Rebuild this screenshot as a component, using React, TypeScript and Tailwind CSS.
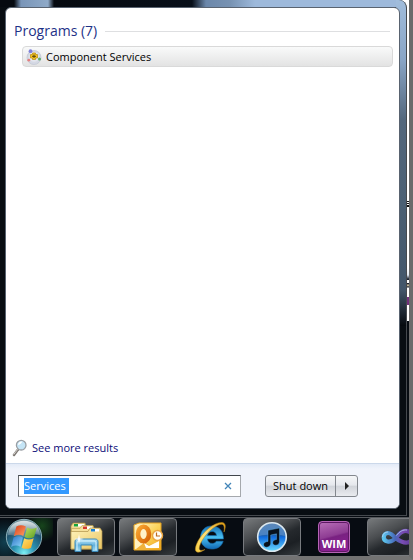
import type { ReactNode } from 'react'

interface TaskButtonProps {
  label: string
  active?: boolean
  className?: string
  children: ReactNode
}

function ComponentServicesIcon() {
  return (
    <svg viewBox="0 0 16 16" className="h-4 w-4 shrink-0" aria-hidden>
      <circle cx="8" cy="8.5" r="7" fill="#d5d9e4" stroke="#c3c8d4" strokeWidth=".8" />
      <circle cx="8" cy="8" r="4.8" fill="#e4e6ee" />
      <path d="M6.5 4h3v1.500h2v3.500h-2v1.500h-3V9h-2V5.500h2z" fill="#f4c420" stroke="#b8890c" strokeWidth=".7" />
      <path d="M8 5.500v3.500M6 7.300h4" stroke="#55430e" strokeWidth="1" />
      <circle cx="4.5" cy="2.2" r="1.900" fill="#7f81da" />
      <circle cx="2.8" cy="11.2" r="1.400" fill="#e58080" />
      <circle cx="13.5" cy="10" r="1.500" fill="#5aab68" />
    </svg>
  )
}

function MagnifierIcon() {
  return (
    <svg viewBox="0 0 16 18" className="h-[18px] w-4 shrink-0" aria-hidden>
      <path d="M6 10.5L2 16" stroke="#7d7873" strokeWidth="2.4" strokeLinecap="round" />
      <path d="M5.5 10.5L2 15.2" stroke="#d3cfcb" strokeWidth="1" strokeLinecap="round" />
      <circle cx="9.2" cy="6.2" r="4.800" fill="#c5e5f6" stroke="#9a9fa4" strokeWidth="1.3" />
      <path d="M6 6a3.4 3.4 0 0 1 4.5-3.2C9 4 8.500 6 6 6z" fill="#fff" />
    </svg>
  )
}

function WindowsOrb() {
  return (
    <svg viewBox="0 0 40 40" className="h-[38px] w-[38px]" aria-hidden>
      <defs>
        <radialGradient id="orb" cx="50%" cy="95%" r="85%">
          <stop offset="0" stopColor="#7df0f4" />
          <stop offset=".35" stopColor="#2c94b4" />
          <stop offset=".75" stopColor="#205470" />
          <stop offset="1" stopColor="#6d8c96" />
        </radialGradient>
        <linearGradient id="orbShine" x1="0" y1="0" x2="0" y2="1">
          <stop offset="0" stopColor="#fff" stopOpacity=".75" />
          <stop offset="1" stopColor="#fff" stopOpacity=".12" />
        </linearGradient>
        <linearGradient id="flagRed" x1="0" y1="0" x2="1" y2="1">
          <stop offset="0" stopColor="#d93d17" />
          <stop offset="1" stopColor="#ffa068" />
        </linearGradient>
        <linearGradient id="flagGreen" x1="0" y1="0" x2="1" y2="1">
          <stop offset="0" stopColor="#b9dd61" />
          <stop offset="1" stopColor="#5c9e22" />
        </linearGradient>
        <linearGradient id="flagBlue" x1="0" y1="0" x2="1" y2="1">
          <stop offset="0" stopColor="#2a72c4" />
          <stop offset="1" stopColor="#8fd6fb" />
        </linearGradient>
        <linearGradient id="flagYellow" x1="0" y1="0" x2="1" y2="1">
          <stop offset="0" stopColor="#ffe473" />
          <stop offset="1" stopColor="#f5a51b" />
        </linearGradient>
      </defs>
      <circle cx="20" cy="20" r="18.600" fill="url(#orb)" stroke="#8eb3bd" strokeWidth="1" />
      <path d="M3 18C4 8 11 3 20 3s16 5 17 15c-9-3-14 3-20 2-6 0-9-3-14-2z" fill="url(#orbShine)" />
      <path d="M12 9c3.500-2 6.500-1.800 10 0l-2.700 10c-3.300-1.800-6.500-1.700-10 .2z" fill="url(#flagRed)" />
      <path d="M23.300 10c3.300 1.800 6.500 1.700 10.200 0l-2.900 10c-3.300 1.700-6.700 1.800-10 0z" fill="url(#flagGreen)" />
      <path d="M9 20.600c3.300-1.900 6.500-2 9.900-.2l-2.600 9.900c-3.300-1.800-6.500-1.700-9.900.1z" fill="url(#flagBlue)" />
      <path d="M20.200 21.300c3.300 1.800 6.600 1.700 10 0l-2.800 9.900c-3.300 1.700-6.600 1.700-9.900 0z" fill="url(#flagYellow)" />
    </svg>
  )
}

function ExplorerIcon() {
  return (
    <svg viewBox="0 0 34 32" className="h-8 w-[34px]" aria-hidden>
      <defs>
        <linearGradient id="folder" x1="0" y1="0" x2="1" y2="1">
          <stop offset="0" stopColor="#fff4bd" />
          <stop offset="1" stopColor="#e9c562" />
        </linearGradient>
        <linearGradient id="stand" x1="0" y1="0" x2="0" y2="1">
          <stop offset="0" stopColor="#b9e5f8" />
          <stop offset=".5" stopColor="#64b2dc" />
          <stop offset="1" stopColor="#a5def5" />
        </linearGradient>
      </defs>
      <path d="M2 28V5l2-3h12l1 3h7v23z" fill="#efd88f" stroke="#a88c43" strokeWidth=".7" />
      <rect x="5" y="3" width="10" height="2.500" fill="#fff" />
      <rect x="5" y="3" width="4" height="2.500" fill="#18a53a" />
      <path d="M2.500 28V7.500H11l2-3h11l1 3h4v20.500z" fill="#f5e09a" stroke="#b59a4c" strokeWidth=".6" />
      <rect x="14" y="5.500" width="9" height="2.500" fill="#fff" />
      <rect x="14" y="5.500" width="4" height="2.500" fill="#d43a2c" />
      <path d="M2 28V10.500h17l2-3.500h10l2 3v18z" fill="url(#folder)" stroke="#b0924a" strokeWidth=".7" />
      <rect x="22" y="8" width="8" height="2.500" fill="#fff" />
      <rect x="22" y="8" width="4" height="2.500" fill="#1a7fd2" />
      <path d="M6 30.500V21c0-2 1-3 3-3h17c2 0 3 1 3 3v9.500h-6V24H12v6.500z" fill="url(#stand)" stroke="#3b88b8" strokeWidth="1" />
      <path d="M8 29v-7c0-1.500 1-2 2-2h15c1.500 0 2 .6 2 2v7" fill="none" stroke="#d9f4fe" strokeWidth="1" />
      <path d="M10 13l.8 4.200L15 18l-4.200.8L10 23l-.8-4.200L5 18l4.200-.8z" fill="#fff" />
    </svg>
  )
}

function OutlookIcon() {
  return (
    <svg viewBox="0 0 32 32" className="h-8 w-8" aria-hidden>
      <defs>
        <linearGradient id="outlook" x1="0" y1="0" x2="1" y2="1">
          <stop offset="0" stopColor="#fff7d2" />
          <stop offset=".5" stopColor="#fbd45d" />
          <stop offset="1" stopColor="#f1a719" />
        </linearGradient>
        <linearGradient id="outlookRing" x1="0" y1="0" x2="1" y2="1">
          <stop offset="0" stopColor="#f9a52f" />
          <stop offset="1" stopColor="#d66508" />
        </linearGradient>
      </defs>
      <path d="M2 4l5-2h22v27H2z" fill="url(#outlook)" stroke="#e6a21e" strokeWidth="1" />
      <path d="M3 28V18h7l5 4v6z" fill="#fff1be" />
      <path d="M4 28l9-7 4 3 11-4v2L16 29z" fill="#f0b23a" />
      <path d="M12 22l5 3 10-5v7H14z" fill="#fffefa" />
      <ellipse cx="11.500" cy="13" rx="5.500" ry="7.200" fill="#fff3c9" stroke="url(#outlookRing)" strokeWidth="4.600" />
      <circle cx="25.500" cy="14.500" r="5" fill="#fffdf5" stroke="#eaa540" strokeWidth="1.500" />
      <path d="M24.500 11.500v3.500H28" fill="none" stroke="#c06a1c" strokeWidth="1.200" />
    </svg>
  )
}

function InternetExplorerIcon() {
  return (
    <svg viewBox="0 0 34 34" className="h-[34px] w-[34px]" aria-hidden>
      <defs>
        <linearGradient id="ieBlue" x1="0" y1="0" x2="0" y2="1">
          <stop offset="0" stopColor="#1872b6" />
          <stop offset=".5" stopColor="#49bff0" />
          <stop offset="1" stopColor="#1168b4" />
        </linearGradient>
        <linearGradient id="ieGold" x1="0" y1="1" x2="1" y2="0">
          <stop offset="0" stopColor="#f8cf45" />
          <stop offset=".5" stopColor="#ffe07a" />
          <stop offset="1" stopColor="#dd9a10" />
        </linearGradient>
      </defs>
      <path
        fillRule="evenodd"
        d="M18.500 6C26 6 30.500 11 30.500 19H14.500c.3 3 2 4.400 4.800 4.400 2 0 3.200-.8 4-2.200h6.900c-1.400 5-5.600 7.800-11.200 7.800C12 29 7.500 24.500 7.500 17.800 7.500 10.500 12 6 18.500 6zm-4 9.500h9c-.3-2.700-2-4-4.300-4-2.500 0-4.200 1.400-4.700 4z"
        fill="url(#ieBlue)"
        stroke="#1269ac"
        strokeWidth=".6"
      />
      <path
        d="M31 12c2-5 2-9-2-9.500C21 2 10 12 5 21c-3 6-3.500 10-1 11 2 .8 5-.5 8-2.500-3 1.200-5 1.200-5.500 0C5.500 27 8 21 13 15 19 8 26 3.500 29.500 4.500c2 .8 2 4 1.500 7.500z"
        fill="url(#ieGold)"
        stroke="#bd8412"
        strokeWidth=".5"
      />
    </svg>
  )
}

function ITunesIcon() {
  return (
    <svg viewBox="0 0 32 32" className="h-8 w-8" aria-hidden>
      <defs>
        <linearGradient id="itunes" x1="0" y1="0" x2="0" y2="1">
          <stop offset="0" stopColor="#356ca7" />
          <stop offset=".45" stopColor="#1b63b7" />
          <stop offset=".5" stopColor="#0f6be0" />
          <stop offset="1" stopColor="#6bdcff" />
        </linearGradient>
      </defs>
      <circle cx="16" cy="16" r="14.300" fill="url(#itunes)" stroke="#dce8ee" strokeWidth="1.600" />
      <path d="M3 15a13 13 0 0 1 26 0c-8-2-18-2-26 0z" fill="#fff" opacity=".2" />
      <path
        d="M12 9.300l11.500-2.300v13.500c0 2.200-1.600 3.700-3.800 3.700-1.900 0-3-1-3-2.500 0-1.900 1.600-2.900 3.800-3.200v-5.700L14.700 14v8.300c0 2.300-1.700 3.900-4 3.900-1.900 0-3.100-1-3.100-2.600 0-1.900 1.700-2.900 4.400-3.200z"
        fill="#07111c"
        stroke="#5fb8ec"
        strokeWidth=".4"
      />
    </svg>
  )
}

function VisualStudioIcon() {
  return (
    <svg viewBox="0 0 36 20" className="h-5 w-9 shrink-0" aria-hidden>
      <defs>
        <linearGradient id="infinity" x1="0" y1="0" x2="1" y2="0">
          <stop offset="0" stopColor="#5cc4ec" />
          <stop offset=".4" stopColor="#4768b8" />
          <stop offset=".65" stopColor="#7a4db4" />
          <stop offset="1" stopColor="#5b3894" />
        </linearGradient>
      </defs>
      <path
        d="M16 11.500C13 8 11 6 8 6c-5 0-6 7.500-.5 8.500 4.500.8 7-2 10-5.500 3-3.700 7-6 11-4.500 5.500 2 4.500 10-1 11-4.500.6-8-1.500-11.500-4z"
        fill="none"
        stroke="url(#infinity)"
        strokeWidth="4.200"
      />
      <path d="M2.500 10c0-3 2.500-5 5.500-5M16.500 8.500c3-4 6.500-6 10.500-5.500" fill="none" stroke="#b6cff3" strokeWidth=".8" />
    </svg>
  )
}

function TaskButton({ label, active, className = 'justify-center', children }: TaskButtonProps) {
  return (
    <button
      type="button"
      aria-label={label}
      className={`flex h-full w-[58px] shrink-0 items-center rounded-sm border ${
        active
          ? 'border-[#777a7e] bg-[linear-gradient(155deg,#777a7c_0%,#4a4d50_35%,#25292d_55%,#1c2024_75%,#363b3e_100%)]'
          : 'border-transparent'
      } ${className}`}
    >
      {children}
    </button>
  )
}

function Taskbar() {
  return (
    <nav aria-label="Taskbar" className="flex h-[39px] gap-1 overflow-hidden border-t border-[#55585c] bg-[#070c12]">
      <button
        type="button"
        aria-label="Start"
        className="flex w-[53px] shrink-0 items-center bg-[radial-gradient(circle_at_42px_8px,#17451c,transparent_16px),radial-gradient(circle_at_5px_24px,#103f50,transparent_24px)] pl-[5px]"
      >
        <WindowsOrb />
      </button>
      <TaskButton label="Windows Explorer" active>
        <ExplorerIcon />
      </TaskButton>
      <TaskButton label="Outlook" active className="pl-3">
        <OutlookIcon />
      </TaskButton>
      <TaskButton label="Internet Explorer">
        <InternetExplorerIcon />
      </TaskButton>
      <TaskButton label="iTunes" active>
        <ITunesIcon />
      </TaskButton>
      <TaskButton label="WIM">
        <span className="flex h-8 w-8 items-end justify-center rounded border border-[#b563b6] bg-[linear-gradient(165deg,#b970b8_0%,#8e3c93_45%,#792181_50%,#93209b_100%)] text-[11px] leading-4 font-bold text-white ring-1 ring-[#5d1763] ring-inset">
          WIM
        </span>
      </TaskButton>
      <TaskButton label="Visual Studio" active className="pl-3">
        <VisualStudioIcon />
      </TaskButton>
    </nav>
  )
}

function StartMenu() {
  return (
    <main className="flex flex-1 flex-col rounded-tr-lg border-r border-b border-[#45494e] pt-[7px] pr-[6px] pb-[6px] pl-[5px] [background:linear-gradient(#a1bddc_0,#89a5c6_60px,#53677c_120px,#4b6074_200px,#42566a_290px,#05090e_326px)_right_top/10px_326px_no-repeat,linear-gradient(90deg,#060a10_0,#060a10_14px,#7995b8_21px,#8faac8_48px,#060a10_54px,#080f19_192px,#6b87aa_206px,#7792b2_230px,#9db9db_255px,#9db9db_100%)_left_top/100%_7px_no-repeat,#080d12]">
      <div className="flex flex-1 flex-col overflow-hidden rounded-md border border-[#596370] bg-white">
        <section className="flex-1 pt-3 pr-[6px] pl-2">
          <div className="flex items-center gap-2 pr-[3px]">
            <h1 className="text-[14px] leading-[22px] text-[#1e3287]">Programs (7)</h1>
            <div className="h-px flex-1 bg-[#dedfe1]" />
          </div>
          <a
            href="#component-services"
            className="mt-1 ml-2 flex h-[21px] items-center gap-1 rounded-sm border border-[#d9d9d9] bg-linear-to-b from-[#f9fafa] to-[#e3e3e3] pl-[3px] text-black"
          >
            <ComponentServicesIcon />
            Component Services
          </a>
        </section>

        <a href="#more-results" className="flex items-center gap-1 px-[6px] pb-[6px] text-[#0b0b78]">
          <MagnifierIcon />
          See more results
        </a>

        <footer className="flex h-[45px] items-center gap-6 border-t border-[#cbd8ea] bg-[linear-gradient(#e3ebf7,#f0f3fb_5px)] pr-[41px] pl-3">
          <form className="flex h-[22px] min-w-0 flex-1 items-center border border-[#a5a8ad] border-t-[#41464c] border-l-[#62666b] bg-white px-[5px]">
            <label htmlFor="search" hidden>
              Search programs and files
            </label>
            <input
              id="search"
              type="text"
              defaultValue="Services "
              className="field-sizing-content h-4 min-w-0 bg-[#3399ff] text-white outline-none"
            />
            <button type="button" aria-label="Clear search" className="mr-[3px] ml-auto">
              <svg viewBox="0 0 8 8" className="h-2 w-2" aria-hidden>
                <path d="M1 1l6 6M7 1L1 7" stroke="#4385b8" strokeWidth="1.300" />
              </svg>
            </button>
          </form>
          <div className="flex h-[22px] rounded-[3px] border border-[#83878e] bg-[linear-gradient(#f5f6f8_0%,#e6e8ed_45%,#d1d4da_52%,#e9ebf0_100%)] text-black">
            <button type="button" className="px-[7px]">
              Shut down
            </button>
            <button type="button" aria-label="Shut down options" className="flex w-[22px] items-center justify-center border-l border-[#83878e]">
              <svg viewBox="0 0 4 8" className="h-2 w-1" aria-hidden>
                <path d="M0 0l4 4-4 4z" fill="#222" />
              </svg>
            </button>
          </div>
        </footer>
      </div>
    </main>
  )
}

export default function App() {
  return (
    <div className="flex min-h-screen flex-col border-r-4 border-b-4 border-[#737373] border-r-[#6b6b6b] bg-[#070c12] font-['Open_Sans','Noto_Sans',sans-serif] text-[11px] leading-4">
      {/* sliver of the desktop left visible beside the menu */}
      <div className="flex flex-1 bg-[linear-gradient(#fff_201px,#111_201px,#111_202px,#fff_202px,#fff_203px,#111_203px,#111_204px,#fff_204px,#fff_205px,#111_205px,#111_207px,#fff_207px,#fff_268px,#dfe8f2_275px,#1a2230_279px,#1a2230_280px,#fff_280px,#fff_283px,#1a2230_283px,#1a2230_284px,#f3e2b5_285px,#1a2230_287px,#fff_288px,#fff_297px,#70307c_297px,#70307c_305px,#fff_305px,#fff_321px,#070c12_321px)] pr-[2px] pb-px">
        <StartMenu />
      </div>
      <Taskbar />
    </div>
  )
}
